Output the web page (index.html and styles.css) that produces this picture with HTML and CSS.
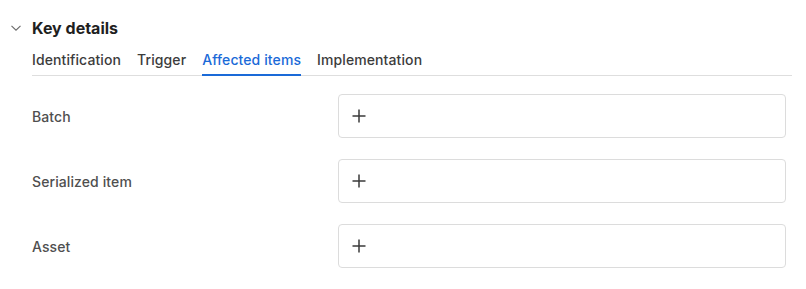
FILE: index.html
```html
<!DOCTYPE html>
<html lang="en">
<head>
    <meta charset="UTF-8">
    <meta name="viewport" content="width=device-width, initial-scale=1.0">
    <title>Key details</title>
    <link rel="stylesheet" href="styles.css">
</head>
<body>
    <section class="details">
        <div class="details-header">
            <svg class="chevron" width="10" height="6" viewBox="0 0 10 6" aria-hidden="true">
                <path d="M0.5 0.8 L5 5.2 L9.5 0.8" fill="none" stroke="#6b6b6b" stroke-width="1.1"/>
            </svg>
            <h2>Key details</h2>
        </div>

        <nav class="tabs">
            <a class="tab">Identification</a>
            <a class="tab">Trigger</a>
            <a class="tab active">Affected items</a>
            <a class="tab">Implementation</a>
        </nav>

        <div class="fields">
            <div class="field-row">
                <span class="field-label">Batch</span>
                <div class="field-box">
                    <svg class="plus" width="14" height="14" viewBox="0 0 14 14" aria-hidden="true">
                        <path d="M7 0.5 V13.5 M0.5 7 H13.5" stroke="#3a3a3a" stroke-width="1.5"/>
                    </svg>
                </div>
            </div>
            <div class="field-row">
                <span class="field-label">Serialized item</span>
                <div class="field-box">
                    <svg class="plus" width="14" height="14" viewBox="0 0 14 14" aria-hidden="true">
                        <path d="M7 0.5 V13.5 M0.5 7 H13.5" stroke="#3a3a3a" stroke-width="1.5"/>
                    </svg>
                </div>
            </div>
            <div class="field-row">
                <span class="field-label">Asset</span>
                <div class="field-box">
                    <svg class="plus" width="14" height="14" viewBox="0 0 14 14" aria-hidden="true">
                        <path d="M7 0.5 V13.5 M0.5 7 H13.5" stroke="#3a3a3a" stroke-width="1.5"/>
                    </svg>
                </div>
            </div>
        </div>
    </section>
</body>
</html>
```

FILE: styles.css
```css
html {
    box-sizing: border-box;
}
*, *:before, *:after {
    box-sizing: inherit;
}
body {
    margin: 0;
    background-color: #fff;
    font-family: 'Inter', 'Noto Sans', sans-serif;
    color: #222;
}

.details {
    padding: 17px 14px 0 11px;
}

.details-header {
    display: flex;
    align-items: center;
    gap: 11px;
    height: 22px;
}

.chevron {
    display: block;
}

.details-header h2 {
    margin: 0;
    font-size: 16px;
    font-weight: 700;
    color: #1f1f1f;
}

.tabs {
    display: flex;
    gap: 16px;
    margin: 9px 0 0 21px;
    border-bottom: 1px solid #dedede;
}

.tab {
    font-size: 14px;
    font-weight: 500;
    letter-spacing: 0.1px;
    color: #3c3c3c;
    padding: 3px 0 6px;
    border-bottom: 2px solid transparent;
    margin-bottom: -1px;
    cursor: pointer;
}

.tab.active {
    color: #1a6ad8;
    border-bottom-color: #1a6ad8;
}

.fields {
    display: flex;
    flex-direction: column;
    gap: 21px;
    margin: 18px 6px 0 21px;
}

.field-row {
    display: grid;
    grid-template-columns: 306px 1fr;
    align-items: center;
}

.field-label {
    font-size: 14px;
    font-weight: 500;
    letter-spacing: 0.1px;
    color: #4f4f4f;
}

.field-box {
    height: 44px;
    border: 1px solid #dcdcdc;
    border-radius: 4px;
    display: flex;
    align-items: center;
    padding-left: 13px;
}

.plus {
    display: block;
}
```
